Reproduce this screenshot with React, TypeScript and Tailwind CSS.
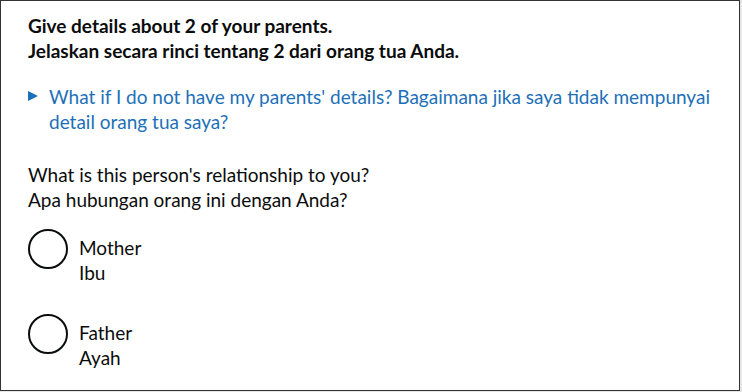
import React from "react";

export default function App() {
  return (
    <div className="w-[742px] h-[392px] bg-[#e6e6e6]">
      <div
        className="w-[740px] h-[391px] border border-[#333333] bg-white pl-[27px] pr-[20px] pt-[12px] text-[#0b0c0c]"
        style={{ fontFamily: 'Lato, Arial, sans-serif' }}
      >
        <h1 className="text-[19px] leading-[25px] font-bold">
          Give details about 2 of your parents.
          <br />
          Jelaskan secara rinci tentang 2 dari orang tua Anda.
        </h1>
        <div className="mt-[21px] flex text-[19px] leading-[25px] text-[#1d70b8]">
          <p className="relative pl-[21px]">
            <span className="absolute left-0 top-[7px] w-0 h-0 border-y-[5px] border-y-transparent border-l-[10px] border-l-[#1d70b8]" />
            What if I do not have my parents' details? Bagaimana jika saya tidak mempunyai detail orang tua saya?
          </p>
        </div>
        <p className="mt-[28px] text-[19px] leading-[25px]">
          What is this person's relationship to you?
          <br />
          Apa hubungan orang ini dengan Anda?
        </p>
        <div className="mt-[17px] flex flex-col gap-[29px]">
          {[
            ["Mother", "Ibu"],
            ["Father", "Ayah"],
          ].map(([en, id]) => (
            <div key={en} className="flex items-start">
              <span className="w-[40px] h-[40px] rounded-full border-2 border-[#0b0c0c] shrink-0" />
              <div className="pl-[11px] pt-[6px] text-[19px] leading-[25px]">
                <div>{en}</div>
                <div>{id}</div>
              </div>
            </div>
          ))}
        </div>
      </div>
    </div>
  );
}
